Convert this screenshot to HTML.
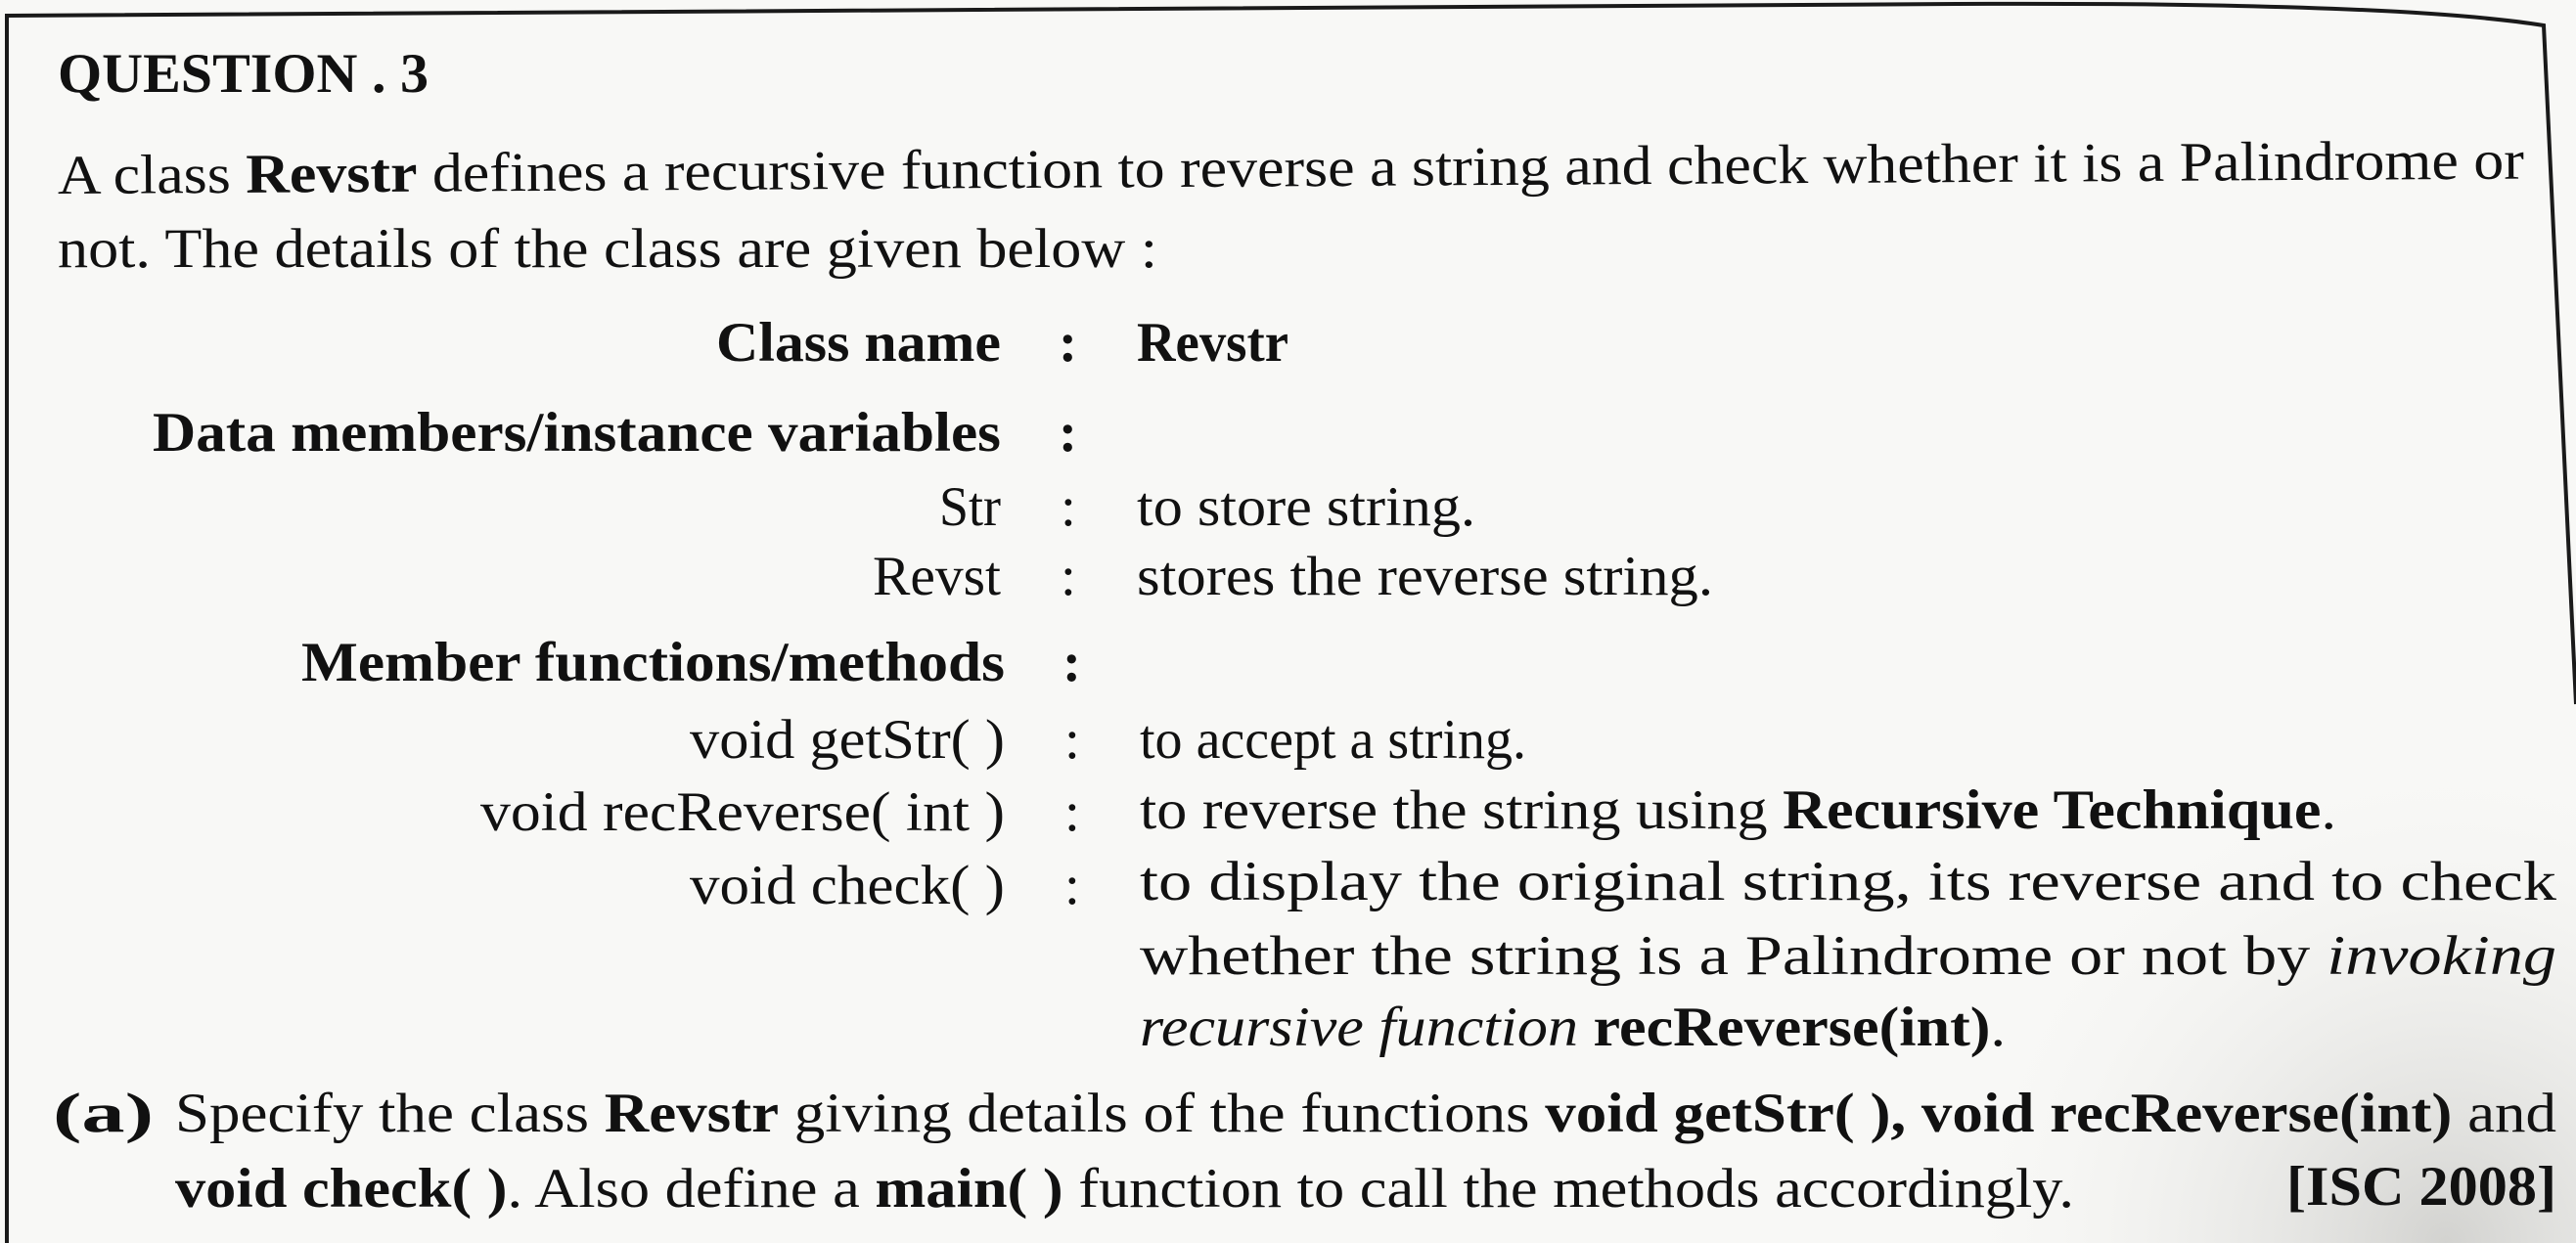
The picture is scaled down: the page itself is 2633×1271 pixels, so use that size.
<!DOCTYPE html>
<html><head><meta charset="utf-8"><style>
html,body{margin:0;padding:0;background:#f7f7f5;}
svg{display:block;}
text{font-family:"Liberation Serif",serif;fill:#111;font-size:57px;}
.b{font-weight:bold;}
.i{font-style:italic;}
</style></head><body>
<svg width="2633" height="1271" viewBox="0 0 2633 1271" xmlns="http://www.w3.org/2000/svg">
<defs>
<radialGradient id="sh" cx="2500" cy="1271" r="520" gradientUnits="userSpaceOnUse">
<stop offset="0" stop-color="#c9c9c6" stop-opacity="0.8"/>
<stop offset="1" stop-color="#f7f7f5" stop-opacity="0"/>
</radialGradient>
</defs>
<rect width="2633" height="1271" fill="#f8f8f6"/>
<rect width="2633" height="1271" fill="url(#sh)"/>
<path d="M7 1271 L7 16 Q1000 10 2000 4 Q2450 2 2600 26 L2633 720" fill="none" stroke="#1a1a1a" stroke-width="4"/>

<text x="59" y="94" class="b" font-size="64" textLength="379" lengthAdjust="spacingAndGlyphs">QUESTION . 3</text>

<text x="59" y="198" textLength="2521" lengthAdjust="spacingAndGlyphs" transform="rotate(-0.35 59 198)">A class <tspan class="b">Revstr</tspan> defines a recursive function to reverse a string and check whether it is a Palindrome or</text>
<text x="59" y="273" textLength="1124" lengthAdjust="spacingAndGlyphs">not. The details of the class are given below :</text>

<text x="732" y="369" class="b" textLength="291" lengthAdjust="spacingAndGlyphs">Class name</text>
<text x="1082" y="369" class="b">:</text>
<text x="1162" y="369" class="b" textLength="155" lengthAdjust="spacingAndGlyphs">Revstr</text>

<text x="156" y="461" class="b" textLength="867" lengthAdjust="spacingAndGlyphs">Data members/instance variables</text>
<text x="1082" y="461" class="b">:</text>

<text x="960" y="537" textLength="63" lengthAdjust="spacingAndGlyphs">Str</text>
<text x="1084" y="537">:</text>
<text x="1162" y="537" textLength="346" lengthAdjust="spacingAndGlyphs">to store string.</text>

<text x="892" y="608" textLength="131" lengthAdjust="spacingAndGlyphs">Revst</text>
<text x="1084" y="608">:</text>
<text x="1162" y="608" textLength="589" lengthAdjust="spacingAndGlyphs">stores the reverse string.</text>

<text x="308" y="696" class="b" textLength="719" lengthAdjust="spacingAndGlyphs">Member functions/methods</text>
<text x="1086" y="696" class="b">:</text>

<text x="705" y="775" textLength="322" lengthAdjust="spacingAndGlyphs">void getStr( )</text>
<text x="1088" y="775">:</text>
<text x="1165" y="775" textLength="395" lengthAdjust="spacingAndGlyphs">to accept a string.</text>

<text x="491" y="849" textLength="536" lengthAdjust="spacingAndGlyphs">void recReverse( int )</text>
<text x="1088" y="849">:</text>
<text x="1165" y="847" textLength="1223" lengthAdjust="spacingAndGlyphs">to reverse the string using <tspan class="b">Recursive Technique</tspan>.</text>

<text x="705" y="924" textLength="322" lengthAdjust="spacingAndGlyphs">void check( )</text>
<text x="1088" y="924">:</text>
<text x="1165" y="920" textLength="1448" lengthAdjust="spacingAndGlyphs">to display the original string, its reverse and to check</text>
<text x="1165" y="996" textLength="1448" lengthAdjust="spacingAndGlyphs">whether the string is a Palindrome or not by <tspan class="i">invoking</tspan></text>
<text x="1165" y="1069" textLength="885" lengthAdjust="spacingAndGlyphs"><tspan class="i">recursive function</tspan> <tspan class="b">recReverse(int)</tspan>.</text>

<text x="54" y="1157" class="b" textLength="103" lengthAdjust="spacingAndGlyphs">(a)</text>
<text x="179" y="1157" textLength="2434" lengthAdjust="spacingAndGlyphs">Specify the class <tspan class="b">Revstr</tspan> giving details of the functions <tspan class="b">void getStr( ), void recReverse(int)</tspan> and</text>
<text x="179" y="1234" textLength="1941" lengthAdjust="spacingAndGlyphs"><tspan class="b">void check( )</tspan>. Also define a <tspan class="b">main( )</tspan> function to call the methods accordingly.</text>
<text x="2337" y="1232" class="b" textLength="276" lengthAdjust="spacingAndGlyphs">[ISC 2008]</text>
</svg>
</body></html>
